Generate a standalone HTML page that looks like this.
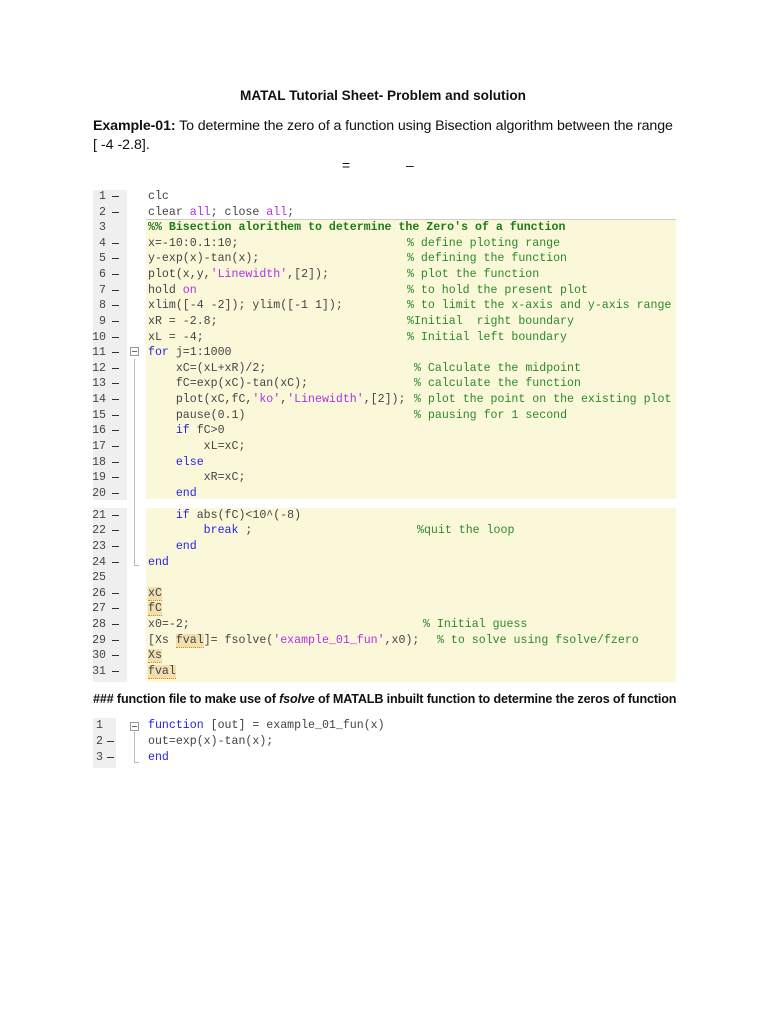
<!DOCTYPE html>
<html><head><meta charset="utf-8"><style>
*{margin:0;padding:0;box-sizing:border-box}
body{width:768px;height:1024px;background:#fff;position:relative;overflow:hidden;font-family:"Liberation Sans",sans-serif;color:#111}
.t{position:absolute;font-size:13px;white-space:nowrap}
.bg{position:absolute}
.g{position:absolute;background:#efefef}
.ln{position:absolute;left:0;width:768px;font-family:"Liberation Mono",monospace;font-size:11.6px;color:#444;white-space:pre;line-height:15.6px;height:15.6px}
.n{position:absolute;top:0;text-align:right}
.c{color:#2a8a2a}.k{color:#2424e8}.s{color:#b030e0}.b{color:#1c7a1c;font-weight:bold}
.h{background:#f2dfb0;border-bottom:1px dotted #e08a00}
.d{position:absolute;top:7px;width:7px;height:1.4px;background:#333}
</style></head><body>
<div class="t" style="left:240px;top:88px;font-weight:bold;font-size:13.6px">MATAL Tutorial Sheet- Problem and solution</div>
<div class="t" style="left:93px;top:118px;font-size:14.2px;letter-spacing:-0.1px"><b>Example-01:</b> To determine the zero of a function using Bisection algorithm between the range</div>
<div class="t" style="left:93px;top:137px;font-size:14.2px">[ -4 -2.8].</div>
<div class="t" style="left:342px;top:157px;font-size:14px">=</div>
<div class="t" style="left:406px;top:157px;font-size:14px">–</div>

<div class="g" style="left:93px;top:190px;width:34px;height:310px"></div>
<div class="bg" style="left:146px;top:220px;width:530px;height:279px;background:#fbf8da"></div>
<div class="bg" style="left:146px;top:219px;width:530px;height:1px;background:#ccc"></div>
<div class="g" style="left:93px;top:508px;width:34px;height:174px"></div>
<div class="bg" style="left:146px;top:508px;width:530px;height:174px;background:#fbf8da"></div>
<div class="bg" style="left:134px;top:359px;width:1px;height:206px;background:#bbb"></div>
<div class="bg" style="left:134px;top:565px;width:5px;height:1px;background:#bbb"></div>
<div class="bg" style="left:130px;top:347px;width:9px;height:9px;border:1px solid #999;background:#fff"></div>
<div class="bg" style="left:132px;top:351px;width:5px;height:1px;background:#666"></div>

<div class="t" style="left:93px;top:692px;font-weight:bold;font-size:12.6px;letter-spacing:-0.15px">### function file to make use of <i>fsolve</i> of MATALB inbuilt function to determine the zeros of function</div>
<div class="g" style="left:93px;top:718px;width:23px;height:50px"></div>
<div class="bg" style="left:130px;top:722px;width:9px;height:9px;border:1px solid #999;background:#fff"></div>
<div class="bg" style="left:132px;top:726px;width:5px;height:1px;background:#666"></div>
<div class="bg" style="left:134px;top:732px;width:1px;height:30px;background:#bbb"></div>
<div class="bg" style="left:134px;top:762px;width:5px;height:1px;background:#bbb"></div>

<div id="code"></div>

<script>
var L=[
[197,'1','clc'],
[213,'2','clear <span class="s">all</span>; close <span class="s">all</span>;'],
[228,'3','<span class="b">%% Bisection alorithem to determine the Zero\'s of a function</span>','',0,1],
[244,'4','x=-10:0.1:10;','% define ploting range',407],
[259,'5','y-exp(x)-tan(x);','% defining the function',407],
[275,'6','plot(x,y,<span class="s">\'Linewidth\'</span>,[2]);','% plot the function',407],
[291,'7','hold <span class="s">on</span>','% to hold the present plot',407],
[306,'8','xlim([-4 -2]); ylim([-1 1]);','% to limit the x-axis and y-axis range',407],
[322,'9','xR = -2.8;','%Initial  right boundary',407],
[338,'10','xL = -4;','% Initial left boundary',407],
[353,'11','<span class="k">for</span> j=1:1000'],
[369,'12','    xC=(xL+xR)/2;','% Calculate the midpoint',414],
[384,'13','    fC=exp(xC)-tan(xC);','% calculate the function',414],
[400,'14','    plot(xC,fC,<span class="s">\'ko\'</span>,<span class="s">\'Linewidth\'</span>,[2]);','% plot the point on the existing plot',414],
[416,'15','    pause(0.1)','% pausing for 1 second',414],
[431,'16','    <span class="k">if</span> fC>0'],
[447,'17','        xL=xC;'],
[463,'18','    <span class="k">else</span>'],
[478,'19','        xR=xC;'],
[494,'20','    <span class="k">end</span>'],
[516,'21','    <span class="k">if</span> abs(fC)&lt;10^(-8)'],
[531,'22','        <span class="k">break</span> ;','%quit the loop',417],
[547,'23','    <span class="k">end</span>'],
[563,'24','<span class="k">end</span>'],
[578,'25','','',0,1],
[594,'26','<span class="h">xC</span>'],
[609,'27','<span class="h">fC</span>'],
[625,'28','x0=-2;','% Initial guess',423],
[641,'29','[Xs <span class="h">fval</span>]= fsolve(<span class="s">\'example_01_fun\'</span>,x0);','% to solve using fsolve/fzero',437],
[656,'30','<span class="h">Xs</span>'],
[672,'31','<span class="h">fval</span>'],
[726,'1','<span class="k">function</span> [out] = example_01_fun(x)','',0,1],
[742,'2','out=exp(x)-tan(x);'],
[758,'3','<span class="k">end</span>']];
var h='';
L.forEach(function(r,i){
 var y=r[0]-8, b3=i>=31;
 var nr=b3?103:106, dl=b3?107:112;
 h+='<div class="ln" style="top:'+y+'px"><span class="n" style="left:'+(nr-22)+'px;width:22px">'+r[1]+'</span>'+
 (r[5]?'':'<span class="d" style="left:'+dl+'px"></span>')+
 '<span style="position:absolute;left:148px;top:0">'+r[2]+'</span>'+
 (r[3]?'<span class="c" style="position:absolute;left:'+r[4]+'px;top:0">'+r[3]+'</span>':'')+'</div>';
});
document.getElementById('code').innerHTML=h;
</script>
</body></html>
